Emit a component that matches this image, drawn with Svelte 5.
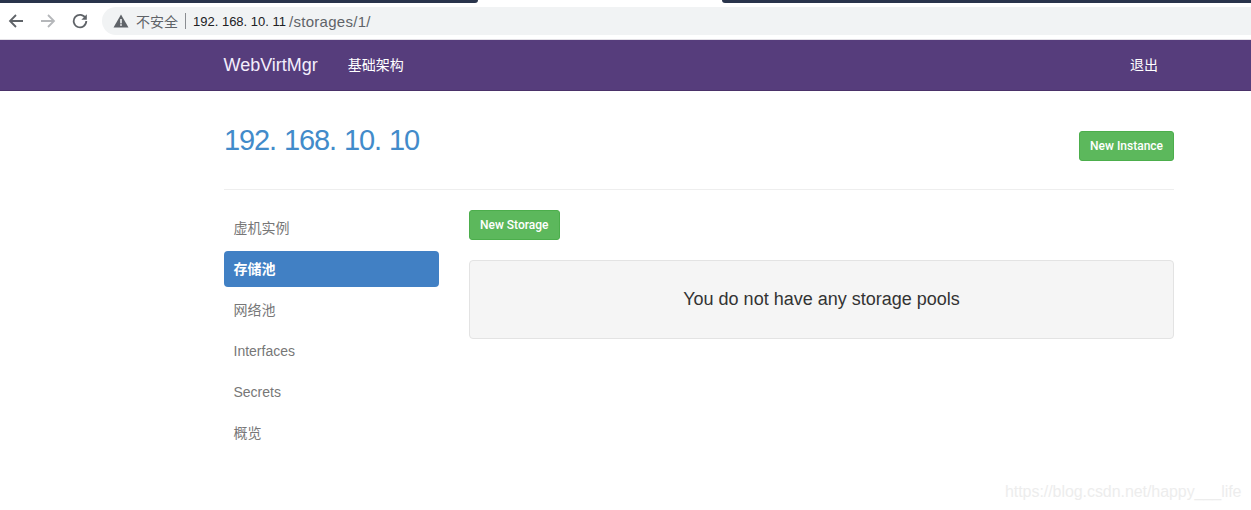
<script>
  const items = ['虚机实例', '存储池', '网络池', 'Interfaces', 'Secrets', '概览'];
</script>

<div class="page">
  <div class="tabstrip">
    <div class="tab-dark left"></div>
    <div class="tab-active"></div>
    <div class="tab-dark right"></div>
  </div>
  <div class="chrome">
    <div class="navs">
      <svg width="16" height="16" viewBox="0 0 16 16" class="ic"><path d="M15 8H2.5M8 2 2 8l6 6" fill="none" stroke="#5f6368" stroke-width="1.8"/></svg>
      <svg width="16" height="16" viewBox="0 0 16 16" class="ic"><path d="M1 8h12.5M8 2l6 6-6 6" fill="none" stroke="#b5b7ba" stroke-width="1.8"/></svg>
      <svg width="16" height="16" viewBox="0 0 16 16" class="ic"><path d="M13.6 5.2A6.3 6.3 0 1 0 14.3 8" fill="none" stroke="#5f6368" stroke-width="1.8"/><path d="M14.8 1.3v5.4H9.4z" fill="#5f6368"/></svg>
    </div>
    <div class="omnibox">
      <svg width="16" height="14" viewBox="0 0 16 14" class="warn"><path d="M8 .5 15.5 13.5H.5z" fill="#5f6368"/><rect x="7.2" y="5" width="1.6" height="4.4" fill="#f1f3f4"/><rect x="7.2" y="10.2" width="1.6" height="1.6" fill="#f1f3f4"/></svg>
      <span class="insecure">不安全</span>
      <span class="sep"></span>
      <span class="host">192. 168. 10. 11</span>
      <span class="path">/storages/1/</span>
    </div>
  </div>
  <nav class="navbar">
    <div class="container navrow">
      <span class="brand">WebVirtMgr</span>
      <span class="navlink">基础架构</span>
      <span class="logout">退出</span>
    </div>
  </nav>
  <main class="container">
    <div class="head">
      <h2>192. 168. 10. 10</h2>
      <button class="btn">New Instance</button>
    </div>
    <div class="body">
      <ul class="side">
        {#each items as item, i}
          <li class:active={i === 1}>{item}</li>
        {/each}
      </ul>
      <div class="content">
        <button class="btn">New Storage</button>
        <div class="well">You do not have any storage pools</div>
      </div>
    </div>
  </main>
  <span class="watermark">https://blog.csdn.net/happy___life</span>
</div>

<style>
  :global(body) { margin: 0; background: #fff; }
  .page {
    position: relative;
    width: 1251px;
    height: 510px;
    overflow: hidden;
    font-family: "Liberation Sans", "Noto Sans CJK SC", sans-serif;
    font-size: 14px;
    color: #333;
  }
  .tabstrip { display: flex; height: 3px; background: #fff; }
  .tab-dark { background: #29344b; height: 3px; }
  .left { width: 478px; border-bottom-right-radius: 4px; }
  .tab-active { width: 244px; }
  .right { flex: 1; border-bottom-left-radius: 4px; }
  .chrome {
    display: flex;
    align-items: center;
    height: 36px;
    border-bottom: 1px solid #e3e0e6;
    background: #fff;
  }
  .navs { display: flex; gap: 16px; padding-left: 8px; width: 94px; box-sizing: border-box; }
  .ic { display: block; }
  .omnibox {
    flex: 1;
    height: 28px;
    margin-left: 8px;
    background: #f1f3f4;
    border-radius: 14px 0 0 14px;
    display: flex;
    align-items: center;
    padding-left: 11px;
    font-size: 14px;
  }
  .warn { margin-right: 7px; }
  .insecure { color: #5f6368; }
  .sep { width: 1px; height: 16px; background: #8a8d91; margin: 0 7px; }
  .host { color: #202124; font-size: 13px; margin-right: 3px; }
  .path { color: #5f6368; font-size: 15px; letter-spacing: 0.28px; }
  .navbar { height: 50px; background: #563d7c; border-bottom: 1px solid #4a3269; }
  .container { width: 950px; margin-left: 224px; }
  .navrow { display: flex; align-items: center; height: 48px; color: #fff; }
  .brand { font-size: 18px; color: #f3eefc; padding-top: 2px; margin-left: -0.5px; }
  .navlink { margin-left: 30px; font-size: 14px; }
  .logout { margin-left: auto; margin-right: 16px; font-size: 14px; }
  .head {
    display: flex;
    justify-content: space-between;
    height: 98px;
    border-bottom: 1px solid #eee;
  }
  h2 {
    margin: 32px 0 0;
    font-size: 29px;
    line-height: 34px;
    font-weight: 400;
    letter-spacing: -1.1px;
    word-spacing: 1px;
    color: #428bca;
    font-family: "Liberation Sans", sans-serif;
  }
  .btn {
    display: block;
    height: 30px;
    padding: 0 10px;
    border: 1px solid #4cae4c;
    border-radius: 3px;
    background: #5cb85c;
    color: #fff;
    font: 500 12px/1.5 "Roboto", sans-serif;
    align-self: flex-start;
  }
  .head .btn { margin-top: 40px; }
  .body { display: flex; gap: 30px; padding-top: 20px; }
  .side { list-style: none; margin: 0; padding: 0; width: 215px; display: flex; flex-direction: column; gap: 5px; }
  .side li {
    height: 36px;
    line-height: 36px;
    padding-left: 9.5px;
    color: #777;
    border-radius: 4px;
  }
  .side li.active { background-color: #4180c4; color: #fff; font-weight: 700; }
  .content { flex: 1; }
  .well {
    margin-top: 20px;
    height: 79px;
    box-sizing: border-box;
    background: #f5f5f5;
    border: 1px solid #e3e3e3;
    border-radius: 4px;
    display: flex;
    align-items: center;
    justify-content: center;
    font-size: 18px;
    padding-bottom: 1px;
  }
  .watermark {
    position: absolute;
    left: 1005px;
    top: 483px;
    font-size: 16px;
    letter-spacing: -0.06px;
    color: #ededed;
    white-space: nowrap;
  }
</style>
